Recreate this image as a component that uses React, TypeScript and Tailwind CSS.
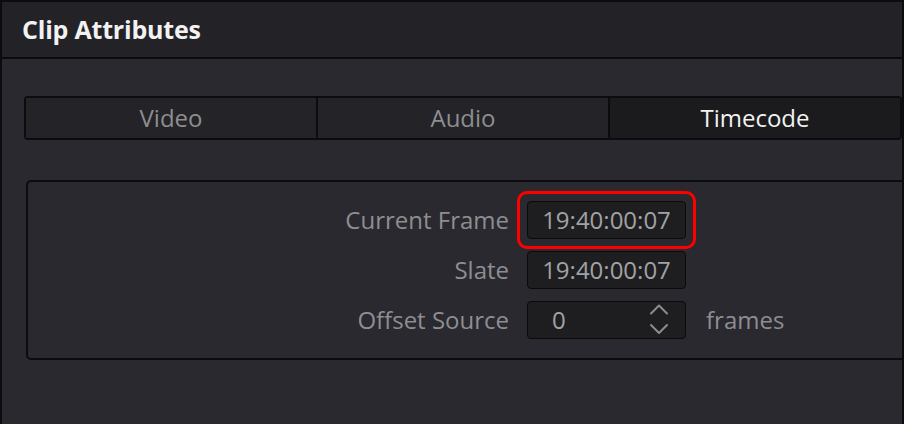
import React from "react";

const FONT = { fontFamily: '"Open Sans", "Noto Sans", sans-serif' };

const tabs = [
  { name: "Video", active: false },
  { name: "Audio", active: false },
  { name: "Timecode", active: true },
];

function Chevrons() {
  return (
    <svg width="20" height="34" viewBox="0 0 20 34" fill="none" className="text-[#8c8c8f]">
      <path d="M2 10.5 L10 2.5 L18 10.5" stroke="currentColor" strokeWidth="2" strokeLinecap="round" strokeLinejoin="round" />
      <path d="M2 22 L10 30 L18 22" stroke="currentColor" strokeWidth="2" strokeLinecap="round" strokeLinejoin="round" />
    </svg>
  );
}

export default function App() {
  return (
    <div
      className="flex h-[424px] w-[904px] flex-col overflow-hidden border-x-2 border-t-2 border-[#0c0c0e] bg-[#29292f]"
      style={FONT}
    >
      <div className="flex h-[57px] shrink-0 items-center border-b-2 border-[#0c0c0e] bg-[#222227] pl-5">
        <span className="text-[25px] font-bold tracking-[-0.2px] text-[#f2f2f2]">Clip Attributes</span>
      </div>

      <div className="ml-[22px] mt-[37px] flex h-[44px] rounded-[4px] border-2 border-[#0c0c0e]">
        {tabs.map((t, i) => (
          <div
            key={t.name}
            className={
              "flex flex-1 items-center justify-center text-[24px] " +
              (i > 0 ? "border-l-2 border-[#0c0c0e] " : "") +
              (t.active ? "bg-[#1b1b1d] text-[#f2f2f2]" : "bg-[#232328] text-[#8e8e91]")
            }
          >
            {t.name}
          </div>
        ))}
      </div>

      <div className="ml-[24px] mt-[40px] w-[900px] rounded-[5px] border-2 border-[#0c0c0e] py-[19px]">
        <div className="grid grid-cols-[481px_159px_auto] items-center gap-x-[18px] gap-y-[12px] text-[24px] text-[#8e8e91]">
          <div className="text-right">Current Frame</div>
          <div className="relative">
            <div className="flex h-[38px] items-center justify-center rounded-[4px] border border-[#0a0a0b] bg-[#1e1e20] text-[#a2a2a5]">
              19:40:00:07
            </div>
            <div className="pointer-events-none absolute -inset-[10px] rounded-[10px] border-[3px] border-[#ff0000]" />
          </div>
          <div />

          <div className="text-right">Slate</div>
          <div className="flex h-[38px] items-center justify-center rounded-[4px] border border-[#0a0a0b] bg-[#1e1e20] text-[#a2a2a5]">
            19:40:00:07
          </div>
          <div />

          <div className="text-right">Offset Source</div>
          <div className="flex h-[38px] items-center justify-between rounded-[4px] border border-[#0a0a0b] bg-[#1e1e20] pl-[24px] pr-[16px] text-[#a2a2a5]">
            <span>0</span>
            <Chevrons />
          </div>
          <div className="pl-[2px]">frames</div>
        </div>
      </div>
    </div>
  );
}
